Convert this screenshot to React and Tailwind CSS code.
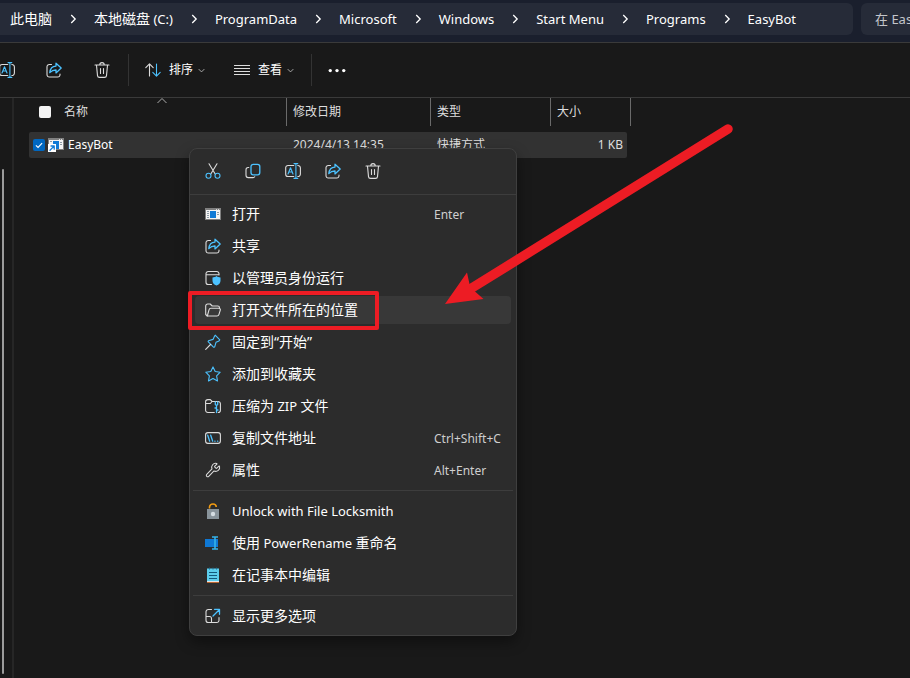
import React from "react";
import { Wrench } from "lucide-react";

const LINE = "#dcdcdc";
const BLUE = "#4cc2ff";

function Icon({ children, size = 16 }) {
  return (
    <svg
      width={size}
      height={size}
      viewBox="0 0 16 16"
      fill="none"
      stroke={LINE}
      strokeWidth="1.1"
      strokeLinecap="round"
      strokeLinejoin="round"
      className="shrink-0"
      aria-hidden="true"
    >
      {children}
    </svg>
  );
}

const CutIcon = () => (
  <Icon>
    <path d="M4 .8 10.2 11M12 .8 5.8 11" />
    <circle cx="3.5" cy="12.8" r="2.5" stroke={BLUE} />
    <circle cx="12.5" cy="12.8" r="2.5" stroke={BLUE} />
  </Icon>
);

const CopyIcon = () => (
  <Icon>
    <path d="M3.800 4.500H3.200A2.200 2.200 0 0 0 1 6.700v5.600A2.300 2.300 0 0 0 3.300 14.600h4.400A2 2 0 0 0 9.700 13.800" />
    <rect x="6" y="1.300" width="8.800" height="10.500" rx="2.200" stroke={BLUE} strokeWidth="1.300" />
  </Icon>
);

const RenameIcon = () => (
  <Icon>
    <path d="M8.800 2.500H3A2.300 2.300 0 0 0 .7 4.800v6.400A2.300 2.300 0 0 0 3 13.500h5.800M12.800 2.500A2.500 2.500 0 0 1 15.400 5v6a2.500 2.500 0 0 1-2.600 2.500" />
    <path d="M10.900 .6v14.800M9 .6h3.800M9 15.400h3.800" stroke={BLUE} />
    <path d="M3 11 5.500 4.800 8 11M3.900 9h3.200" stroke={BLUE} />
  </Icon>
);

const ShareIcon = () => (
  <Icon>
    <path d="M5.500 2.500H3.300A2.300 2.300 0 0 0 1 4.800v7.900A2.300 2.300 0 0 0 3.300 15h8.400a2.300 2.300 0 0 0 2.300-2.300V12" />
    <path
      d="M10 1.300v2.800C6.200 4.200 4.200 6.600 3.800 10.600 5.600 8.700 7.400 8 10 8v2.900l5.200-4.800Z"
      stroke={BLUE}
      strokeWidth="1.300"
    />
  </Icon>
);

const TrashIcon = () => (
  <Icon>
    <path d="M1 3h14M5.800 2.800a2.200 2.200 0 0 1 4.400 0M2.500 3.200l1 10.400a2 2 0 0 0 2 1.800h5a2 2 0 0 0 2-1.800l1-10.400M6.500 6.500v5M9.500 6.500v5" />
  </Icon>
);

const SortIcon = () => (
  <Icon>
    <path d="M4.500 14V2M.8 5.600 4.500 1.900l3.700 3.700" />
    <path d="M11.500 2v12M7.800 10.400l3.700 3.700 3.700-3.700" stroke={BLUE} />
  </Icon>
);

const ViewIcon = () => (
  <Icon>
    <path d="M0 3.500h16M0 6.500h16M0 9.500h16M0 12.500h16" strokeWidth="1" shapeRendering="crispEdges" />
  </Icon>
);

const MoreIcon = () => (
  <Icon size={18}>
    <g fill="#ffffff" stroke="none">
      <circle cx="2" cy="8.500" r="1.500" />
      <circle cx="8" cy="8.500" r="1.500" />
      <circle cx="14" cy="8.500" r="1.500" />
    </g>
  </Icon>
);

const AppIcon = () => (
  <Icon>
    <g stroke="none">
      <rect x="0" y="2" width="16" height="12" fill="#808080" />
      <rect x="1" y="4" width="14" height="9" fill="#f4f4f4" />
      <path d="M11 3h1v1h-1zM13 3h1v1h-1z" fill="#dddddd" />
      <path d="M2 5h2v1H2zM2 7h2v1H2zM2 9h2v1H2zM2 11h2v1H2zM12 6h2v1h-2zM12 8h2v1h-2z" fill="#8d9aa5" />
      <rect x="5" y="5" width="6" height="7" fill="#0f7ad6" />
    </g>
  </Icon>
);

const ShortcutIcon = () => (
  <Icon>
    <g stroke="none">
      <rect x="0" y="1" width="16" height="12" fill="#808080" />
      <rect x="1" y="3" width="14" height="9" fill="#f4f4f4" />
      <path d="M11 2h1v1h-1zM13 2h1v1h-1z" fill="#dddddd" />
      <path d="M2 4h2v1H2zM12 5h2v1h-2zM12 7h2v1h-2z" fill="#8d9aa5" />
      <rect x="5" y="4" width="6" height="8" fill="#0f7ad6" />
      <rect x="0" y="7" width="8" height="8" fill="#ffffff" />
    </g>
    <path d="M2 13.200 5.800 9.400M3 9h3.200v3.200" stroke="#0f7ad6" strokeWidth="1.300" />
  </Icon>
);

const AdminIcon = () => (
  <Icon>
    <path d="M6.500 14.500H3.300A2.300 2.300 0 0 1 1 12.200V3.800a2.300 2.300 0 0 1 2.300-2.300h8.400A2.300 2.300 0 0 1 14 3.800V5M1 4.800h13" />
    <path d="M11.500 6c1.200 1 2.500 1.400 4 1.500v3.200c0 2.200-1.500 3.900-4 4.900-2.500-1-4-2.700-4-4.900V7.500c1.500-.1 2.800-.5 4-1.500Z" fill={BLUE} stroke="none" />
  </Icon>
);

const FolderIcon = () => (
  <Icon>
    <path d="M2.300 14 .7 12.500V3.900A1.900 1.900 0 0 1 2.600 2h2.600l2 2h5.600a1.700 1.700 0 0 1 1.700 1.700v.6" />
    <path d="M2.300 14 4 7.800a2 2 0 0 1 1.900-1.500h8a1.400 1.400 0 0 1 1.400 1.800l-1.400 4.500a2 2 0 0 1-1.900 1.400Z" />
  </Icon>
);

const PinIcon = () => (
  <Icon>
    <path d="m10.200 1.200 4.600 4.600-.8 1.100-3 1.400-1.300 4.600-1 .4-5.600-5.600.4-1 4.500-1.300 1.400-3Z" stroke={BLUE} />
    <path d="M5.500 10.500.7 15.300" />
  </Icon>
);

const StarIcon = () => (
  <Icon>
    <path d="m8 .9 2.200 4.600 5 .7-3.600 3.600.9 5.100L8 12.500l-4.500 2.400.9-5.100L.8 6.200l5-.7Z" stroke={BLUE} />
  </Icon>
);

const ZipIcon = () => (
  <Icon>
    <path d="M9.300 14.500H3A2.300 2.300 0 0 1 .6 12.200V3.900A2.300 2.300 0 0 1 2.900 1.600h2.400l1.800 1.900h6A2.300 2.300 0 0 1 15.400 5.800v6.400a2.300 2.300 0 0 1-2.200 2.300M.8 5.500h4.500l1.800-2" />
    <path d="M10.300 4v2.500l1.200 1v7M12.700 4v2.500l-1.200 1M10 10h1.500M11.500 12H13" stroke={BLUE} strokeWidth="1.300" />
  </Icon>
);

const PathIcon = () => (
  <Icon>
    <rect x=".6" y="2.600" width="14.800" height="10.800" rx="2.300" />
    <path d="m2.700 5.200 2 6M5.700 5.200l2 6M9.800 11.200h.3M12.500 11.200h.3" stroke={BLUE} strokeWidth="1.300" />
  </Icon>
);

const WrenchIcon = () => <Wrench size={16} strokeWidth={1.6} color={LINE} className="shrink-0" aria-hidden="true" />;

const LockIcon = () => (
  <Icon>
    <path d="M4.500 5.500V4A3.500 3.500 0 0 1 8 1a3.300 3.300 0 0 1 3.300 3" stroke="#f09a12" strokeWidth="1.600" strokeLinecap="butt" />
    <rect x="2" y="6" width="12" height="10" fill="#89949b" stroke="none" />
    <circle cx="8" cy="11" r="2.200" fill="#d5dde2" stroke="none" />
  </Icon>
);

const PowerRenameIcon = () => (
  <Icon>
    <path d="M0 4h13v8H0z" fill="#0f78d4" stroke="none" />
    <path d="M7 2h6M7 14h6M10 2v12" stroke="#35b3ea" strokeWidth="1.600" strokeLinecap="butt" />
  </Icon>
);

const NotepadIcon = () => (
  <Icon>
    <rect x="2" y="1.500" width="12" height="13" fill="#5ccdec" stroke="none" />
    <path d="M2 14h12v1.500H2z" fill="#e3e6e8" stroke="none" />
    <path d="M2 15h12v1H2z" fill="#b9652f" stroke="none" />
    <path d="M4.500 1v1M8 1v1M11.500 1v1" stroke="#1a6f96" />
    <path d="M4 5.500h8M4 8.500h8M4 11.500h8" stroke="#12597c" strokeLinecap="butt" />
  </Icon>
);

const ExpandIcon = () => (
  <Icon>
    <path d="M6.500 1.500H3.300A2.300 2.300 0 0 0 1 3.800v8.400a2.300 2.300 0 0 0 2.300 2.300h8.400a2.300 2.300 0 0 0 2.300-2.300V9.500M1 8.500h3.500a2 2 0 0 1 2 2v4" />
    <path d="M8 8 14.500 1.500M9.500 1.300h5v5" stroke={BLUE} strokeWidth="1.300" />
  </Icon>
);

const Chevron = ({ className, d = "m6 3.500 4.500 4.500L6 12.500", size = 14, width = 1.5 }) => (
  <svg width={size} height={size} viewBox="0 0 16 16" fill="none" stroke="currentColor" strokeWidth={width} className={className} aria-hidden="true">
    <path d={d} />
  </svg>
);

const DOWN = "m3 5.500 5 5 5-5";
const UP = "m2 12 6-6 6 6";

/* Latin runs are set one step smaller so they sit evenly beside the Chinese glyphs. */
const Label = ({ text }) =>
  text.split(/([\x20-\x7e]+)/).map((part, i) =>
    i % 2 ? (
      <span key={i} className="text-[13px] whitespace-pre">
        {part}
      </span>
    ) : (
      part
    )
  );

const crumbs = ["此电脑", "本地磁盘 (C:)", "ProgramData", "Microsoft", "Windows", "Start Menu", "Programs", "EasyBot"];

const quickActions = [
  ["剪切", CutIcon],
  ["复制", CopyIcon],
  ["重命名", RenameIcon],
  ["共享", ShareIcon],
  ["删除", TrashIcon],
];

const groups = [
  [
    { icon: AppIcon, text: "打开", keys: "Enter" },
    { icon: ShareIcon, text: "共享" },
    { icon: AdminIcon, text: "以管理员身份运行" },
    { icon: FolderIcon, text: "打开文件所在的位置", active: true },
    { icon: PinIcon, text: "固定到“开始”" },
    { icon: StarIcon, text: "添加到收藏夹" },
    { icon: ZipIcon, text: "压缩为 ZIP 文件" },
    { icon: PathIcon, text: "复制文件地址", keys: "Ctrl+Shift+C" },
    { icon: WrenchIcon, text: "属性", keys: "Alt+Enter" },
  ],
  [
    { icon: LockIcon, text: "Unlock with File Locksmith" },
    { icon: PowerRenameIcon, text: "使用 PowerRename 重命名" },
    { icon: NotepadIcon, text: "在记事本中编辑" },
  ],
  [{ icon: ExpandIcon, text: "显示更多选项" }],
];

function MenuItem({ icon: ItemIcon, text, keys, active }) {
  return (
    <li className="py-0.5">
      <button
        type="button"
        className={`relative flex h-7 w-full items-center rounded pl-2.5 text-left text-sm text-white ${active ? "bg-[#383838]" : ""}`}
      >
        <ItemIcon />
        <span className="ml-[11px] flex-1 whitespace-nowrap">
          <Label text={text} />
        </span>
        {keys && <span className="w-[77px] pt-0.5 text-xs whitespace-nowrap text-[#cfcfcf]">{keys}</span>}
        {active && (
          <span className="absolute -top-[5px] -left-[7px] h-[39px] w-[191px] rounded-xs border-4 border-[#ed1c24]" />
        )}
      </button>
    </li>
  );
}

function ContextMenu() {
  return (
    <div className="absolute top-[148px] left-[189px] w-[328px] rounded-lg border border-[#3f3f3f] bg-[#2c2c2c] pb-px shadow-[0_6px_14px_rgba(0,0,0,0.4)]">
      <div className="flex h-[46px] items-center border-b border-[#3d3d3d] pb-0.5 pl-[3px]">
        {quickActions.map(([name, ActionIcon]) => (
          <button key={name} type="button" aria-label={name} className="flex h-8 w-10 items-center justify-center">
            <ActionIcon />
          </button>
        ))}
      </div>
      {groups.map((items, i) => (
        <ul key={i} className={`mx-[3px] px-0.5 ${i ? "border-t border-[#3d3d3d] pt-1" : "pt-[3px]"} ${i === 2 ? "pb-0.5" : "pb-1"}`}>
          {items.map((item) => (
            <MenuItem key={item.text} {...item} />
          ))}
        </ul>
      ))}
    </div>
  );
}

function AddressBar() {
  return (
    <header className="flex h-[43px] shrink-0 gap-2 border-b border-[#3a3a3a] bg-[#1a1f2d] pt-[3px] pb-[7px] text-sm text-white">
      <nav aria-label="路径" className="flex min-w-0 flex-1 items-center overflow-hidden rounded-r-md bg-[#262b38] pl-2.5">
        {crumbs.map((name, i) => (
          <React.Fragment key={name}>
            {i > 0 && (
              <span className="flex w-[42px] shrink-0 justify-center">
                <Chevron />
              </span>
            )}
            <a href="#" className="whitespace-nowrap">
              <Label text={name} />
            </a>
          </React.Fragment>
        ))}
      </nav>
      <input
        type="text"
        aria-label="搜索"
        placeholder="在 EasyBot 中搜索"
        className="w-[49px] shrink-0 rounded-l-md bg-[#262b38] pl-3.5 text-[13px] placeholder:text-[#c4c6cb]"
      />
    </header>
  );
}

function Toolbar() {
  return (
    <div className="flex h-[55px] shrink-0 items-center border-b border-[#3a3a3a] text-xs text-white">
      <button type="button" aria-label="重命名" className="-ml-[17px] flex h-8 w-[47px] items-center justify-center">
        <RenameIcon />
      </button>
      <button type="button" aria-label="共享" className="flex h-8 w-12 items-center justify-center">
        <ShareIcon />
      </button>
      <button type="button" aria-label="删除" className="flex h-8 w-12 items-center justify-center">
        <TrashIcon />
      </button>
      <span className="ml-0.5 h-8 w-px bg-[#333333]" />
      <button type="button" className="ml-4 flex h-8 items-center">
        <SortIcon />
        <span className="ml-2">排序</span>
        <Chevron d={DOWN} size={9} className="ml-1 text-[#c0c0c0]" />
      </button>
      <button type="button" className="ml-7 flex h-8 items-center">
        <ViewIcon />
        <span className="ml-2">查看</span>
        <Chevron d={DOWN} size={9} className="ml-1 text-[#c0c0c0]" />
      </button>
      <span className="ml-4 h-8 w-px bg-[#333333]" />
      <button type="button" aria-label="更多" className="ml-4 flex h-8 items-center">
        <MoreIcon />
      </button>
    </div>
  );
}

const TickBox = ({ label, checked }) => (
  <span className="relative flex size-3 shrink-0 items-center justify-center">
    <input
      type="checkbox"
      aria-label={label}
      defaultChecked={checked}
      className="size-3 appearance-none rounded-xs bg-[#f3f3f3] checked:bg-[#0067c0]"
    />
    {checked && <Chevron d="m3 8.500 3.500 3.500L13 5" size={10} width={1.8} className="pointer-events-none absolute text-white" />}
  </span>
);

function FileTable() {
  return (
    <table className="ml-[15px] table-fixed border-separate border-spacing-0 text-xs text-[#dedede]">
      <colgroup>
        <col className="w-[258px]" />
        <col className="w-[144px]" />
        <col className="w-[120px]" />
        <col className="w-[76px]" />
        <col className="w-1" />
      </colgroup>
      <thead>
        <tr className="h-7 text-left">
          <th className="relative border-r border-[#6a6a6a] p-0 font-normal">
            <div className="flex items-center pl-2.5">
              <TickBox label="全选" />
              <span className="ml-[13px]">名称</span>
            </div>
            <Chevron d={UP} size={12} width={1.3} className="absolute -top-1 left-[127px] text-[#b0b0b0]" />
          </th>
          <th className="border-r border-[#6a6a6a] p-0 pl-1.5 font-normal">修改日期</th>
          <th className="border-r border-[#6a6a6a] p-0 pl-1.5 font-normal">类型</th>
          <th colSpan={2} className="border-r border-[#6a6a6a] p-0 pl-1.5 font-normal">大小</th>
        </tr>
      </thead>
      <tbody>
        <tr>
          <td className="h-1.5 p-0" colSpan={5} />
        </tr>
        <tr className="h-[26px]">
          <td className="rounded-l-xs bg-[#323232] p-0">
            <div className="flex items-center pl-1">
              <TickBox label="选择 EasyBot" checked />
              <span className="ml-[3px]">
                <ShortcutIcon />
              </span>
              <span className="ml-1 text-white">EasyBot</span>
            </div>
          </td>
          <td className="bg-[#323232] p-0 pl-1.5">2024/4/13 14:35</td>
          <td className="bg-[#323232] p-0 pl-1.5">快捷方式</td>
          <td className="rounded-r-xs bg-[#323232] p-0 pr-1 text-right">1 KB</td>
          <td className="p-0" />
        </tr>
      </tbody>
    </table>
  );
}

export default function App() {
  return (
    <div className="relative flex h-screen flex-col overflow-hidden bg-[#191919] font-['Noto_Sans','Noto_Sans_CJK_SC',sans-serif]">
      <AddressBar />
      <Toolbar />
      <main className="flex min-h-0 flex-1">
        <aside className="w-3.5 shrink-0 border-r-2 border-[#262626] pt-[71px] pb-1 pl-0.5">
          <div className="h-full w-0.5 rounded-full bg-[#9b9b9b]" />
        </aside>
        <section className="min-w-0 flex-1">
          <FileTable />
        </section>
      </main>
      <ContextMenu />
      <svg width="300" height="190" viewBox="440 120 300 190" className="pointer-events-none absolute top-[120px] left-[440px]" aria-hidden="true">
        <path d="M728 129 471 288.500" stroke="#ed1c24" strokeWidth="9.500" strokeLinecap="round" />
        <path d="M445 304 467 272.500l2.500 11.500 5.500 7.500 8.500 7.500Z" fill="#ed1c24" />
      </svg>
    </div>
  );
}
